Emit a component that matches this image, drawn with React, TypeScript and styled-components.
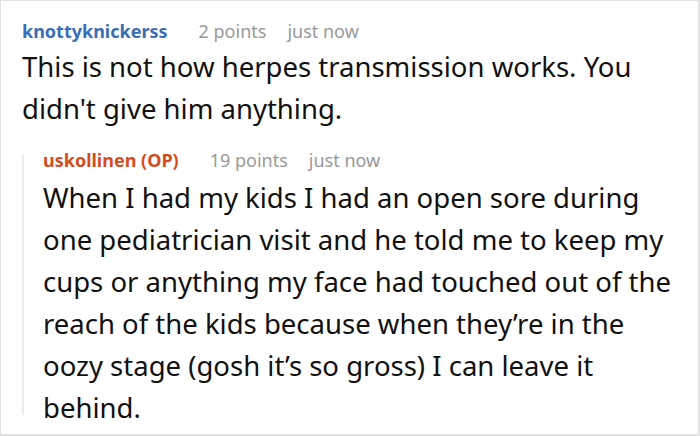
import React from 'react'
import styled, { createGlobalStyle } from 'styled-components'

const GlobalStyle = createGlobalStyle`
  html, body {
    margin: 0;
    padding: 0;
    background: #fff;
  }
  body {
    font-family: 'Noto Sans', 'Open Sans', sans-serif;
    color: #111;
  }
`

type CommentProps = {
  author: string
  op?: boolean
  points: number
  time: string
  text: string
}

const Comment = ({ author, op, points, time, text }: CommentProps) => {
  return (
    <>
      <Header>
        <Author $op={op}>{op ? `${author} (OP)` : author}</Author>
        <Meta>{points} points</Meta>
        <Meta>{time}</Meta>
      </Header>
      <Body>{text}</Body>
    </>
  )
}

const App = () => {
  return (
    <Frame>
      <GlobalStyle />
      <Thread>
        <Comment
          author="knottyknickerss"
          points={2}
          time="just now"
          text="This is not how herpes transmission works. You didn't give him anything."
        />
        <Reply>
          <Comment
            author="uskollinen"
            op
            points={19}
            time="just now"
            text="When I had my kids I had an open sore during one pediatrician visit and he told me to keep my cups or anything my face had touched out of the reach of the kids because when they’re in the oozy stage (gosh it’s so gross) I can leave it behind."
          />
        </Reply>
      </Thread>
    </Frame>
  )
}

const Frame = styled.div`
  box-sizing: border-box;
  width: 700px;
  height: 436px;
  border: 1px solid #e2e2e2;
  border-right-width: 2px;
  border-bottom-width: 2px;
  overflow: hidden;
`

const Thread = styled.div`
  padding: 15px 14px 0 21px;
`

const Header = styled.div`
  display: flex;
  align-items: baseline;
  gap: 21px;
  font-size: 18px;
  line-height: 30px;
`

const Author = styled.span<{ $op?: boolean }>`
  font-weight: 700;
  margin-right: 10px;
  color: ${(p) => (p.$op ? '#d24e1f' : '#3a6db3')};
`

const Meta = styled.span`
  color: #999;
`

const Body = styled.p`
  margin: 0;
  font-size: 27.5px;
  line-height: 42px;
`

const Reply = styled.div`
  position: relative;
  margin-top: 15px;
  padding-left: 21px;

  & > p {
    margin-top: 2px;
  }

  &::before {
    content: '';
    position: absolute;
    left: 0;
    top: 10px;
    bottom: 14px;
    width: 2px;
    background: #ececec;
  }
`

export default App
